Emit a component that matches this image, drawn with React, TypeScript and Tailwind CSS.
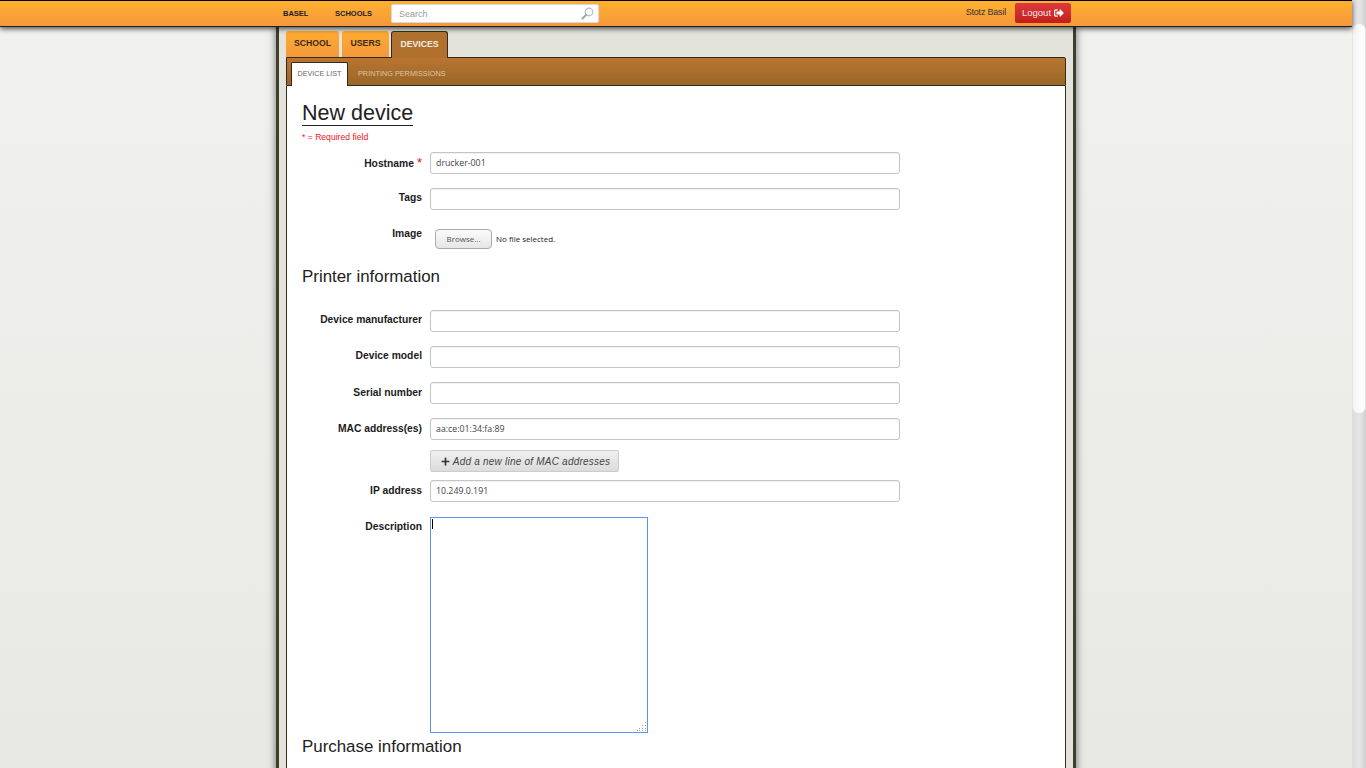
import { FaPlus, FaSignOutAlt } from 'react-icons/fa';

const sans = 'font-["Liberation_Sans",Arial,sans-serif]';

function Label({ children, className = '' }: { children: React.ReactNode; className?: string }) {
  return (
    <div className={`w-[120px] shrink-0 text-right text-[10.3px] leading-[14px] font-bold text-[#1c1c1c] ${className}`}>
      {children}
    </div>
  );
}

function TextRow({ label, value, required, low, className = '' }: { label: string; value?: string; required?: boolean; low?: boolean; className?: string }) {
  return (
    <div className={`flex gap-2 ${className}`}>
      <Label className={low ? 'pt-[4px]' : 'pt-[3px]'}>
        {label}
        {required && <span className="ml-[3px] text-[13px] leading-none font-normal text-[#e01010]">*</span>}
      </Label>
      <input
        readOnly
        value={value ?? ''}
        className='h-[22px] w-[470px] rounded-[3px] border border-[#c4c4c4] bg-white px-[5px] font-["Open_Sans",sans-serif] text-[8.8px] text-[#444] shadow-[inset_0_1px_1px_rgba(0,0,0,0.06)] outline-none'
      />
    </div>
  );
}

function SectionTitle({ children, className = '' }: { children: React.ReactNode; className?: string }) {
  return <h2 className={`text-[16.9px] leading-[20px] font-normal text-[#222] ${className}`}>{children}</h2>;
}

export default function App() {
  return (
    <div className={`flex h-screen overflow-hidden ${sans}`}>
      <div className="flex min-w-0 flex-1 flex-col bg-gradient-to-b from-[#f1f1ef] to-[#e8e8e4]">
        <header className="relative z-10 h-[27px] shrink-0 border-y border-[#222] border-t-black bg-gradient-to-b from-[#ffb12e] to-[#f6973c] shadow-[0_2px_5px_rgba(0,0,0,0.65)]">
          <div className="mx-auto flex h-full w-[800px] items-center pr-[5px] pl-[7px]">
            <a className="w-[52px] text-[7.5px] font-bold text-[#222]">BASEL</a>
            <a className="w-[56px] text-[7.5px] font-bold text-[#222]">SCHOOLS</a>
            <div className="flex h-[19px] w-[208px] items-center justify-between rounded-[2px] border border-[#d9d9d9] bg-white pr-[4px] pl-[7px]">
              <span className="pt-[2px] text-[9px] text-[#999]">Search</span>
              <svg width="13" height="13" viewBox="0 0 13 13" fill="none" aria-hidden="true">
                <circle cx="8" cy="5" r="3.8" stroke="#b5bcc0" strokeWidth="1.2" fill="#f4f7f8" />
                <path d="M5.2 7.8 1.5 11.5" stroke="#a4a4a4" strokeWidth="2" strokeLinecap="round" />
              </svg>
            </div>
            <span className="-mt-[2px] ml-auto text-[9px] leading-none tracking-[-0.2px] text-[#333]">Stotz Basil</span>
            <button className="-mt-[2px] ml-[9px] flex h-[20px] w-[56px] items-center justify-center gap-[3px] rounded-[2px] bg-gradient-to-b from-[#de3a3e] to-[#c11d19] pt-px text-[9.5px] text-[#f6e6e6]">
              Logout <FaSignOutAlt className="text-[10px] text-white" />
            </button>
          </div>
        </header>

        <main className="mx-auto w-[800px] flex-1 border-x-[3px] border-[#3f3f2e] bg-[#e3e3dc] px-[7px] pt-[4px] shadow-[0_0_8px_rgba(0,0,0,0.55)]">
          <nav className="flex h-[26px] items-end text-[8.7px] font-bold">
            <a className="flex h-full w-[53px] items-center justify-center rounded-t-[3px] bg-gradient-to-b from-[#ffab30] to-[#f5983c] text-[#3a2a18]">SCHOOL</a>
            <a className="ml-[3px] flex h-full w-[47px] items-center justify-center rounded-t-[3px] bg-gradient-to-b from-[#ffab30] to-[#f5983c] text-[#3a2a18]">USERS</a>
            <a className="relative z-10 -mb-px ml-[2px] flex h-[27px] w-[57px] items-center justify-center rounded-t-[3px] border border-b-0 border-[#33291c] bg-[#b0702e] text-[#f1ece3]">DEVICES</a>
          </nav>

          <div className="flex h-[29px] items-end rounded-tr-[2px] border border-[#33291c] bg-gradient-to-b from-[#b97530] to-[#9a6628] pl-[4px]">
            <a className="-mb-px flex h-[24px] w-[57px] items-center justify-center rounded-t-[2px] border border-b-0 border-[#33291c] bg-white text-[7.2px] text-[#666]">DEVICE LIST</a>
            <a className="-mb-px flex h-[24px] items-center pl-[10px] text-[7.3px] text-[#d9c6a8]">PRINTING PERMISSIONS</a>
          </div>

          <section className="h-[700px] border-x border-[#33291c] bg-white px-[15px]">
            <h1 className="w-fit border-b border-[#222] pt-[15px] text-[21.5px] leading-[24px] text-[#222]">New device</h1>
            <p className="mt-[5px] text-[8.6px] leading-[12px] text-[#e8141c]">* = Required field</p>

            <TextRow label="Hostname" value="drucker-001" required low className="mt-[9px]" />
            <TextRow label="Tags" className="mt-[14px]" />

            <div className="mt-[14px] flex gap-2">
              <Label className="pt-[3px]">Image</Label>
              <div className='mt-[5px] ml-[5px] flex items-center gap-[4px] font-["Open_Sans",sans-serif] text-[8px] text-[#222]'>
                <button className="h-[20px] w-[57px] rounded-[4px] border border-[#aaa] bg-gradient-to-b from-[#fbfbfb] to-[#e6e6e6] text-[#555]">Browse...</button>
                No file selected.
              </div>
            </div>

            <SectionTitle className="mt-[18px]">Printer information</SectionTitle>

            <TextRow label="Device manufacturer" className="mt-[23px]" />
            <TextRow label="Device model" className="mt-[14px]" />
            <TextRow label="Serial number" low className="mt-[14px]" />
            <TextRow label="MAC address(es)" value="aa:ce:01:34:fa:89" low className="mt-[14px]" />

            <div className="mt-[10px] pl-[128px]">
              <button className="flex h-[22px] w-[189px] items-center justify-center gap-[3px] rounded-[2px] border border-[#ccc] bg-gradient-to-b from-[#efefef] to-[#dcdcdc] pl-[2px] text-[10px] text-[#444] italic">
                <FaPlus className="text-[9px] text-[#333]" />
                <span className="tracking-[0.22px]">Add a new line of MAC addresses</span>
              </button>
            </div>

            <TextRow label="IP address" value="10.249.0.191" low className="mt-[8px]" />

            <div className="mt-[15px] flex gap-2">
              <Label className="pt-[3px]">Description</Label>
              <div className="relative h-[216px] w-[218px] border border-[#5a94ec] bg-white">
                <span className="absolute top-[1px] left-[1px] h-[10px] w-px bg-black" />
                <svg className="absolute right-0 bottom-0" width="11" height="11" viewBox="0 0 11 11" fill="#999" aria-hidden="true">
                  <rect x="9" y="1" width="1" height="1" />
                  <rect x="9" y="4" width="1" height="1" />
                  <rect x="6" y="4" width="1" height="1" />
                  <rect x="9" y="7" width="1" height="1" />
                  <rect x="6" y="7" width="1" height="1" />
                  <rect x="3" y="7" width="1" height="1" />
                  <rect x="9" y="9" width="1" height="1" />
                  <rect x="6" y="9" width="1" height="1" />
                  <rect x="3" y="9" width="1" height="1" />
                  <rect x="1" y="9" width="1" height="1" />
                </svg>
              </div>
            </div>

            <SectionTitle className="mt-[4px]">Purchase information</SectionTitle>
          </section>
        </main>
      </div>

      <div className="w-[14px] shrink-0 bg-gradient-to-r from-[#dcdcdc] via-[#e6e6e6] to-[#cfcfcf] pt-[23px]">
        <div className="h-[391px] rounded-[7px] border border-[#e4e4e4] bg-gradient-to-r from-[#f4f4f4] to-white" />
      </div>
    </div>
  );
}
